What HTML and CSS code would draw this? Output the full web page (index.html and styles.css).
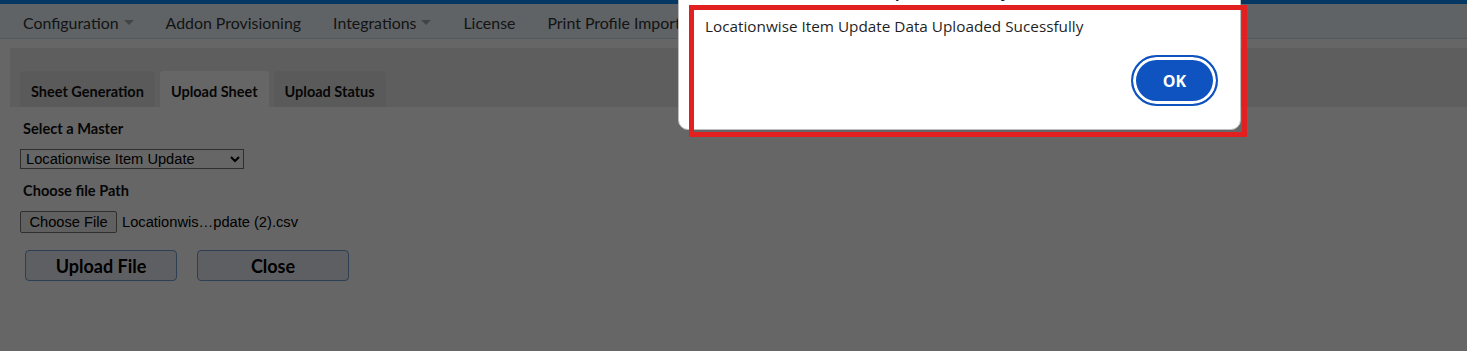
FILE: index.html
```html
<!DOCTYPE html>
<html lang="en">
<head>
<meta charset="utf-8">
<title>Upload Sheet</title>
<link rel="stylesheet" href="styles.css">
</head>
<body>
<div class="topstrip"></div>
<nav class="nav">
  <a class="nav-item">Configuration <span class="caret"></span></a>
  <a class="nav-item">Addon Provisioning</a>
  <a class="nav-item">Integrations <span class="caret"></span></a>
  <a class="nav-item">License</a>
  <a class="nav-item">Print Profile Import</a>
</nav>
<main class="main">
  <div class="tab-header">
    <div class="tab">Sheet Generation</div>
    <div class="tab tab-active">Upload Sheet</div>
    <div class="tab">Upload Status</div>
  </div>
  <div class="tab-panel">
    <div class="label">Select a Master</div>
    <select class="select"><option>Locationwise Item Update</option></select>
    <div class="label label-2">Choose file Path</div>
    <div class="file-row">
      <button class="file-btn">Choose File</button>
      <span class="file-name">Locationwis…pdate (2).csv</span>
    </div>
    <div class="actions">
      <button class="btn">Upload File</button>
      <button class="btn">Close</button>
    </div>
  </div>
</main>
<div class="overlay"></div>
<div class="dialog">
  <div class="dialog-title">Upload Summary</div>
  <div class="dialog-msg">Locationwise Item Update Data Uploaded Sucessfully</div>
  <div class="dialog-foot"><button class="ok-btn">OK</button></div>
</div>
<div class="annotation"></div>
</body>
</html>
```
FILE: styles.css
```css
* { box-sizing: border-box; }
html, body { margin: 0; padding: 0; }
body {
  width: 1467px;
  height: 351px;
  overflow: hidden;
  background: #ffffff;
  font-family: Lato, "Liberation Sans", sans-serif;
  color: #333;
  position: relative;
}
.topstrip { height: 4px; background: #0a8df5; }
.nav {
  height: 35px;
  background: #edf7ff;
  border-bottom: 1px solid #cfdbe6;
  display: flex;
  align-items: center;
  padding: 3px 0 0 7px;
}
.nav-item {
  font-size: 15.9px;
  color: #333;
  padding: 0 16px;
  display: flex;
  align-items: center;
  white-space: nowrap;
}
.caret {
  display: inline-block;
  width: 0; height: 0;
  margin-left: 5px;
  border-left: 5px solid transparent;
  border-right: 5px solid transparent;
  border-top: 5px solid #aaa;
}
.main { padding: 9px 0 0 10px; }
.tab-header {
  height: 59px;
  background: #ebebeb;
  padding: 23px 0 0 10px;
  display: flex;
  align-items: flex-end;
}
.tab {
  height: 36px;
  padding: 5px 11px 0;
  margin-right: 5px;
  display: flex;
  align-items: center;
  font-size: 14.5px;
  font-weight: 700;
  color: #111;
  background: #e2e2e2;
  border-radius: 4px 4px 0 0;
}
.tab-active { background: #ffffff; }
.tab-panel { padding: 12px 0 0 10px; }
.label {
  font-size: 14.6px;
  font-weight: 700;
  color: #111;
  line-height: 20px;
  padding-left: 3px;
}
.label-2 { margin-top: 12px; }
.select {
  display: block;
  margin-top: 10px;
  width: 224px;
  height: 20px;
  font-family: "Liberation Sans", Arial, sans-serif;
  font-size: 14.67px;
  color: #000;
  border: 1px solid #767676;
  border-radius: 0;
  background: #fff;
  padding: 0 1px;
}
.file-row {
  margin-top: 10px;
  display: flex;
  align-items: center;
  font-family: "Liberation Sans", Arial, sans-serif;
  font-size: 14.67px;
  color: #000;
}
.file-btn {
  width: 97px;
  height: 22px;
  font-family: inherit;
  font-size: 14.67px;
  color: #000;
  background: #efefef;
  border: 1px solid #767676;
  border-radius: 2px;
  padding: 0;
}
.file-name { margin-left: 5px; }
.actions {
  margin-top: 17px;
  padding-left: 5px;
  display: flex;
  gap: 20px;
}
.btn {
  width: 152px;
  height: 31px;
  font-family: Lato, sans-serif;
  font-size: 18px;
  font-weight: 700;
  color: #000;
  background: #eceef4;
  border: 1px solid #6f9fd3;
  border-radius: 4px;
}
.overlay {
  position: absolute;
  inset: 0;
  background: rgba(0, 0, 0, 0.6);
}
.dialog {
  position: absolute;
  left: 678px;
  top: -40px;
  width: 563px;
  height: 170px;
  background: #fff;
  border: 1px solid #bdbdbd;
  border-radius: 10px;
  padding: 22px 22px 0 26px;
  display: flex;
  flex-direction: column;
  font-family: "Open Sans", "Noto Sans", sans-serif;
}
.dialog-title {
  height: 20px;
  line-height: 20px;
  font-size: 14.5px;
  font-weight: 700;
  color: #111;
  text-align: center;
  padding-right: 30px;
}
.dialog-msg {
  margin-top: 13px;
  font-size: 15.3px;
  line-height: 20px;
  color: #1f1f1f;
}
.dialog-foot {
  margin-top: auto;
  margin-bottom: 23px;
  display: flex;
  justify-content: flex-end;
}
.ok-btn {
  width: 87px;
  height: 51px;
  border-radius: 999px;
  border: 2px solid #0f53c0;
  box-shadow: inset 0 0 0 3px #fff;
  background: #0f53c0;
  color: #fff;
  font-family: "Open Sans", "Noto Sans", sans-serif;
  font-size: 16px;
  font-weight: 700;
}
.annotation {
  position: absolute;
  left: 689px;
  top: 5px;
  width: 558px;
  height: 132px;
  border: 5px solid #e32020;
}
```
